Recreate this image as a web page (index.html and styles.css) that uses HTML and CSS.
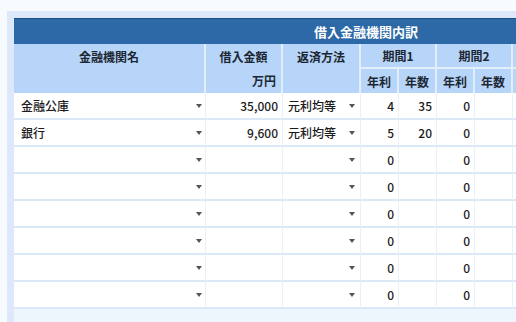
FILE: index.html
```html
<!DOCTYPE html>
<html lang="ja">
<head>
<meta charset="utf-8">
<title>借入金融機関内訳</title>
<link rel="stylesheet" href="styles.css">
</head>
<body>
<div class="page">
  <div class="panel">
    <div class="table-wrap">
      <table class="loan">
        <colgroup>
          <col class="c-name"><col class="c-amt"><col class="c-method">
          <col class="c-sub"><col class="c-sub"><col class="c-sub"><col class="c-sub">
          <col class="c-rest">
        </colgroup>
        <thead>
          <tr class="title-row"><th colspan="8">借入金融機関内訳</th></tr>
          <tr class="head-1">
            <th rowspan="2" class="top">金融機関名</th>
            <th rowspan="2" class="top amt-head"><div class="l1">借入金額</div><div class="l2">万円</div></th>
            <th rowspan="2" class="top">返済方法</th>
            <th colspan="2">期間1</th>
            <th colspan="2">期間2</th>
            <th></th>
          </tr>
          <tr class="head-2">
            <th>年利</th><th>年数</th><th>年利</th><th>年数</th><th></th>
          </tr>
        </thead>
        <tbody>
          <tr>
            <td><div class="sel"><span>金融公庫</span><i class="caret"></i></div></td>
            <td class="num">35,000</td>
            <td><div class="sel"><span>元利均等</span><i class="caret"></i></div></td>
            <td class="num">4</td><td class="num">35</td><td class="num">0</td><td class="num"></td><td></td>
          </tr>
          <tr>
            <td><div class="sel"><span>銀行</span><i class="caret"></i></div></td>
            <td class="num">9,600</td>
            <td><div class="sel"><span>元利均等</span><i class="caret"></i></div></td>
            <td class="num">5</td><td class="num">20</td><td class="num">0</td><td class="num"></td><td></td>
          </tr>
          <tr>
            <td><div class="sel"><span></span><i class="caret"></i></div></td>
            <td class="num"></td>
            <td><div class="sel"><span></span><i class="caret"></i></div></td>
            <td class="num">0</td><td class="num"></td><td class="num">0</td><td class="num"></td><td></td>
          </tr>
          <tr>
            <td><div class="sel"><span></span><i class="caret"></i></div></td>
            <td class="num"></td>
            <td><div class="sel"><span></span><i class="caret"></i></div></td>
            <td class="num">0</td><td class="num"></td><td class="num">0</td><td class="num"></td><td></td>
          </tr>
          <tr>
            <td><div class="sel"><span></span><i class="caret"></i></div></td>
            <td class="num"></td>
            <td><div class="sel"><span></span><i class="caret"></i></div></td>
            <td class="num">0</td><td class="num"></td><td class="num">0</td><td class="num"></td><td></td>
          </tr>
          <tr>
            <td><div class="sel"><span></span><i class="caret"></i></div></td>
            <td class="num"></td>
            <td><div class="sel"><span></span><i class="caret"></i></div></td>
            <td class="num">0</td><td class="num"></td><td class="num">0</td><td class="num"></td><td></td>
          </tr>
          <tr>
            <td><div class="sel"><span></span><i class="caret"></i></div></td>
            <td class="num"></td>
            <td><div class="sel"><span></span><i class="caret"></i></div></td>
            <td class="num">0</td><td class="num"></td><td class="num">0</td><td class="num"></td><td></td>
          </tr>
          <tr>
            <td><div class="sel"><span></span><i class="caret"></i></div></td>
            <td class="num"></td>
            <td><div class="sel"><span></span><i class="caret"></i></div></td>
            <td class="num">0</td><td class="num"></td><td class="num">0</td><td class="num"></td><td></td>
          </tr>
        </tbody>
      </table>
    </div>
  </div>
</div>
</body>
</html>
```
FILE: styles.css
```css
* { box-sizing: border-box; }
html, body {
  margin: 0;
  height: 100%;
  overflow: hidden;
  background: #f8fbfe;
  font-family: "Noto Sans CJK JP", "Noto Sans", sans-serif;
  font-size: 12px;
  color: #1b1b1b;
}
.page {
  padding: 11px 0 0 7px;
  height: 100%;
}
.panel {
  background: #dde8fa;
  padding: 7px 0 0 7px;
  height: 100%;
  width: 720px;
}
.table-wrap {
  background: #eef6fd;
  height: 100%;
}
.loan {
  border-collapse: separate;
  border-spacing: 0;
  table-layout: fixed;
  width: 704px;
}
.c-name { width: 192px; }
.c-amt { width: 77px; }
.c-method { width: 78px; }
.c-sub { width: 38px; }
.c-rest { width: 205px; }

.title-row th {
  height: 26px;
  background: #2c69a6;
  border-top: 1px solid #1d4f86;
  color: #ffffff;
  font-size: 13px;
  font-weight: 700;
  text-align: center;
  padding: 0;
}
.head-1 th, .head-2 th {
  background: #b7d5f8;
  font-weight: 700;
  color: #1d2733;
  text-align: center;
  border-right: 2px solid #e3eefb;
  padding: 0;
}
.head-1 th { height: 25px; border-bottom: 2px solid #e3eefb; }
.head-2 th { height: 24px; border-bottom: 0; }
.head-1 th.top { vertical-align: top; line-height: 25px; border-bottom: 0; }
.amt-head .l1 { line-height: 25px; }
.amt-head .l2 { line-height: 23px; text-align: right; padding-right: 5px; }

tbody td {
  height: 27px;
  background: #ffffff;
  border-bottom: 2px solid #dbe8f8;
  border-right: 1px solid #e9f0f9;
  padding: 0 2px 0 7px;
  white-space: nowrap;
  font-weight: 500;
}
tbody td.num {
  text-align: right;
  padding: 0 4px 0 0;
}
.sel {
  display: flex;
  align-items: center;
  justify-content: space-between;
}
.caret {
  display: block;
  width: 0;
  height: 0;
  border-left: 3.5px solid transparent;
  border-right: 3.5px solid transparent;
  border-top: 4px solid #555555;
  margin-right: 1px;
}
tbody td:nth-child(3) { padding-left: 5px; padding-right: 4px; }
```
